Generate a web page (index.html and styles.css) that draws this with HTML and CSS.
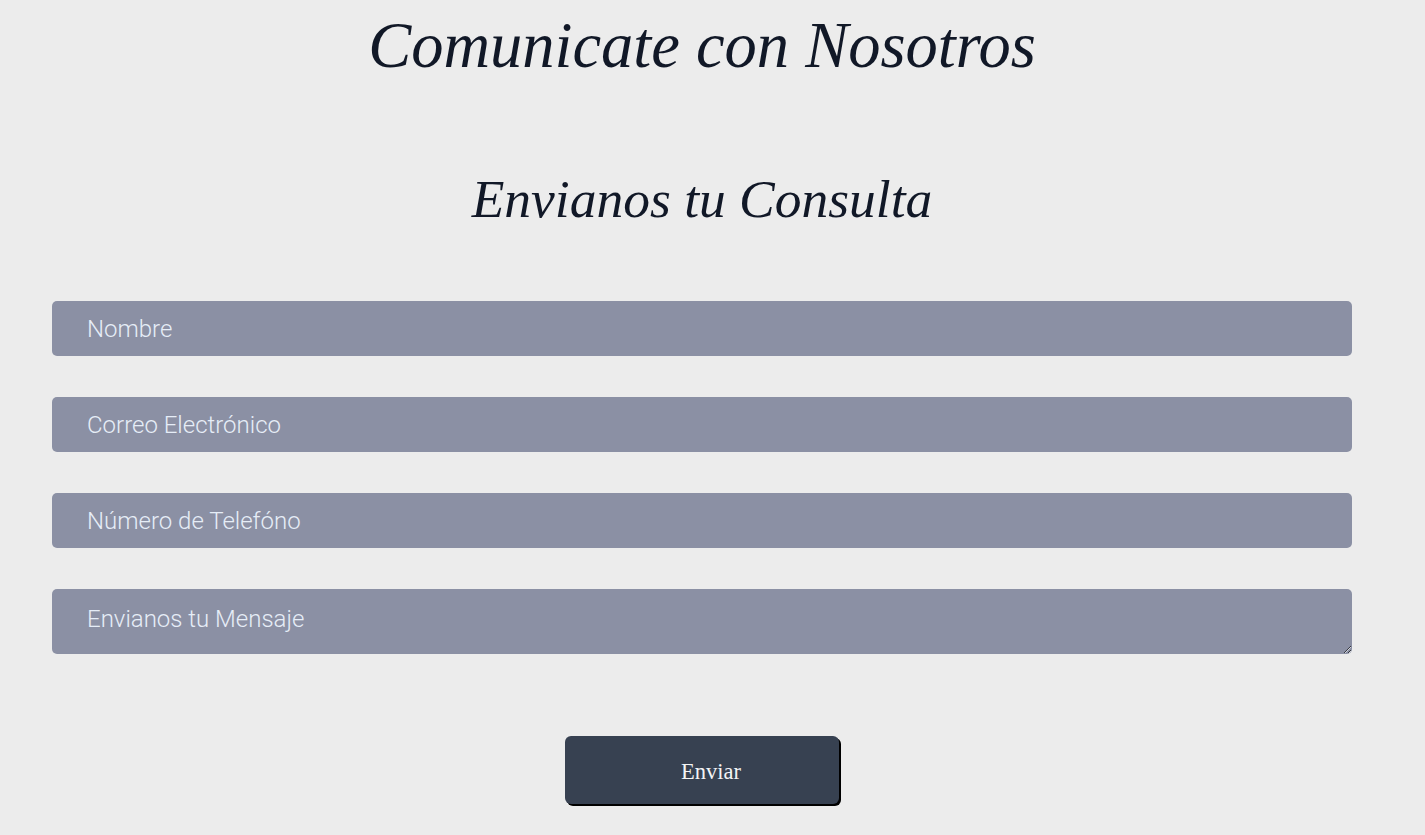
FILE: index.html
```html
<!DOCTYPE html>
<html lang="es">
<head>
<meta charset="utf-8">
<title>Comunicate con Nosotros</title>
<link rel="stylesheet" href="styles.css">
</head>
<body>
<main class="page">
  <h1 class="title">Comunicate con Nosotros</h1>
  <section class="contact">
    <h2 class="subtitle">Envianos tu Consulta</h2>
    <form class="form">
      <input class="field" type="text" placeholder="Nombre">
      <input class="field" type="email" placeholder="Correo Electrónico">
      <input class="field" type="tel" placeholder="Número de Telefóno">
      <textarea class="field field-area" placeholder="Envianos tu Mensaje"></textarea>
      <button class="send" type="button">Enviar</button>
    </form>
  </section>
</main>
</body>
</html>
```
FILE: styles.css
```css
html, body {
  margin: 0;
  padding: 0;
  background: #ececec;
}
body {
  min-height: 835px;
}
.page {
  width: 1404px;
  display: flex;
  flex-direction: column;
  align-items: center;
}
.title {
  margin: 0;
  padding-top: 13px;
  font-family: "Liberation Serif", "Times New Roman", serif;
  font-style: italic;
  font-weight: 400;
  font-size: 64.5px;
  line-height: 66px;
  color: #111827;
  text-align: center;
}
.contact {
  width: 100%;
  display: flex;
  flex-direction: column;
  align-items: center;
}
.subtitle {
  margin: 94px 0 0;
  font-family: "Liberation Serif", "Times New Roman", serif;
  font-style: italic;
  font-weight: 400;
  font-size: 53.5px;
  line-height: 52px;
  color: #111827;
  text-align: center;
}
.form {
  margin-top: 76px;
  width: 1300px;
  display: flex;
  flex-direction: column;
  align-items: center;
  gap: 41px;
}
.field {
  box-sizing: border-box;
  display: block;
  width: 100%;
  height: 55px;
  margin: 0;
  padding: 0 35px;
  border: 0;
  border-radius: 5px;
  background: #8b90a4;
  font-family: Roboto, "Liberation Sans", sans-serif;
  font-weight: 300;
  font-size: 24px;
  color: #eef2f8;
  outline: none;
}
.field::placeholder {
  color: #e6edf7;
  opacity: 1;
}
.field-area {
  height: 65px;
  padding-top: 16px;
  resize: vertical;
  line-height: 28px;
}
.send {
  margin-top: 41px;
  width: 274px;
  height: 68px;
  padding: 4px 0 0 18px;
  border: 0;
  border-radius: 6px;
  background: #374151;
  box-shadow: 2px 2px 0 #000;
  font-family: "Liberation Serif", "Times New Roman", serif;
  font-size: 22.5px;
  color: #f3f4f6;
  cursor: pointer;
}
```
